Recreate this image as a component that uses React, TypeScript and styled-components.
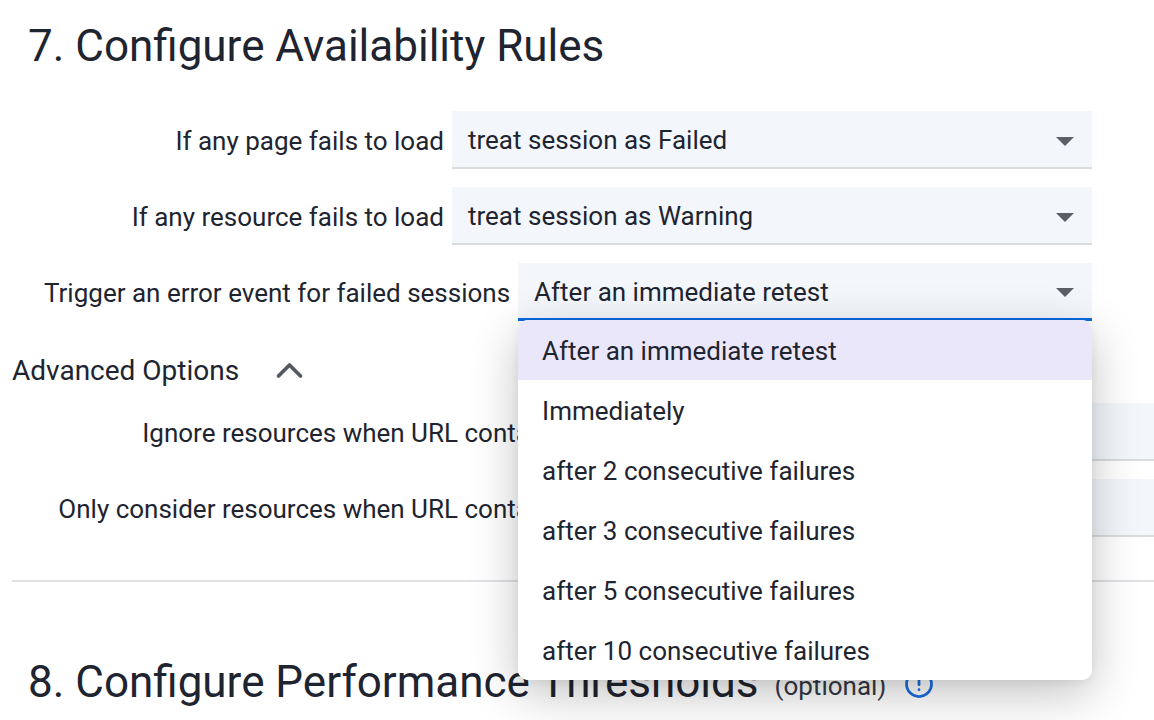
import styled, { createGlobalStyle } from "styled-components"

const GlobalStyle = createGlobalStyle`
html, body {
    margin: 0;
    padding: 0;
    background: #ffffff;
    overflow: hidden;
}
body {
    font-family: Roboto, "Liberation Sans", sans-serif;
    color: #1e2430;
}
`

const Page = styled.div`
width: 1154px;
height: 720px;
padding-left: 12px;
box-sizing: border-box;
overflow: hidden;
`

const Title = styled.h1<{ $top: number }>`
margin: ${p => p.$top}px 0 0 16px;
font-size: 44px;
line-height: 52px;
font-weight: 400;
color: #1e2430;
display: flex;
align-items: center;
white-space: nowrap;
`

const Optional = styled.span`
font-size: 26px;
color: #333a44;
margin-left: 16px;
margin-top: 8px;
`

const InfoIcon = styled.svg`
width: 30px;
height: 30px;
margin-left: 18px;
margin-top: 4px;
`

const Rules = styled.div`
margin: 39px 0 0 32px;
display: flex;
flex-direction: column;
gap: 18px;
width: 1048px;
`

const Row = styled.div`
display: flex;
align-items: center;
gap: 8px;
`

const Label = styled.label<{ $min: number }>`
min-width: ${p => p.$min}px;
flex-shrink: 0;
text-align: right;
font-size: 26px;
white-space: nowrap;
padding-top: 2px;
`

const SelectBox = styled.div<{ $open?: boolean }>`
position: relative;
flex: 1;
height: 58px;
box-sizing: border-box;
background: #f3f7fc;
border-bottom: ${p => (p.$open ? "3px solid #0a6ae0" : "2px solid #dcdcdc")};
display: flex;
align-items: center;
justify-content: space-between;
padding: 2px 18px 0 16px;
font-size: 26px;
`

const Caret = styled.span`
width: 0;
height: 0;
border-left: 9.5px solid transparent;
border-right: 9.5px solid transparent;
border-top: 9px solid #5b5f66;
margin-top: 2px;
`

const Menu = styled.ul`
position: absolute;
top: calc(100% + 2px);
left: 0;
right: 0;
margin: 0;
padding: 0;
list-style: none;
background: #ffffff;
border-radius: 10px;
overflow: hidden;
box-shadow: 0 14px 48px rgba(0, 0, 0, 0.24), 0 2px 8px rgba(0, 0, 0, 0.06);
z-index: 10;
`

const MenuItem = styled.li<{ $active?: boolean }>`
height: 60px;
display: flex;
align-items: center;
padding: 1px 0 0 24px;
box-sizing: border-box;
font-size: 26px;
background: ${p => (p.$active ? "#ebe7fb" : "#ffffff")};
`

const AdvancedToggle = styled.div`
margin-top: 29px;
height: 40px;
display: flex;
align-items: center;
font-size: 28px;
gap: 34px;
`

const Chevron = styled.svg`
width: 33px;
height: 33px;
`

const AdvancedRows = styled.div`
margin-top: 13px;
width: 1200px;
display: flex;
flex-direction: column;
gap: 18px;
`

const Input = styled.div`
flex: 1;
height: 58px;
box-sizing: border-box;
background: #f3f7fc;
border-bottom: 2px solid #dcdcdc;
`

const Divider = styled.hr`
margin: 43px 0 0 0;
border: none;
height: 2px;
width: 1200px;
background: #dfe1e5;
`

const failOptions = [
    "After an immediate retest",
    "Immediately",
    "after 2 consecutive failures",
    "after 3 consecutive failures",
    "after 5 consecutive failures",
    "after 10 consecutive failures",
]

export default function App() {
    return (
        <Page>
            <GlobalStyle />
            <Title $top={20}>7. Configure Availability Rules</Title>

            <Rules>
                <Row>
                    <Label $min={400}>If any page fails to load</Label>
                    <SelectBox>
                        <span>treat session as Failed</span>
                        <Caret />
                    </SelectBox>
                </Row>
                <Row>
                    <Label $min={400}>If any resource fails to load</Label>
                    <SelectBox>
                        <span>treat session as Warning</span>
                        <Caret />
                    </SelectBox>
                </Row>
                <Row>
                    <Label $min={400}>Trigger an error event for failed sessions</Label>
                    <SelectBox $open>
                        <span>After an immediate retest</span>
                        <Caret />
                        <Menu>
                            {failOptions.map((opt, i) => (
                                <MenuItem key={opt} $active={i === 0}>{opt}</MenuItem>
                            ))}
                        </Menu>
                    </SelectBox>
                </Row>
            </Rules>

            <AdvancedToggle>
                <span>Advanced Options</span>
                <Chevron viewBox="0 0 24 24" fill="none" stroke="#555a62" strokeWidth="2.7" strokeLinecap="round" strokeLinejoin="round">
                    <path d="M4 16l8-8 8 8" />
                </Chevron>
            </AdvancedToggle>

            <AdvancedRows>
                <Row>
                    <Label $min={552}>Ignore resources when URL contains</Label>
                    <Input />
                </Row>
                <Row>
                    <Label $min={552}>Only consider resources when URL contains</Label>
                    <Input />
                </Row>
            </AdvancedRows>

            <Divider />

            <Title $top={70}>
                8. Configure Performance Thresholds
                <Optional>(optional)</Optional>
                <InfoIcon viewBox="0 0 24 24" fill="none" stroke="#1a6ee0" strokeWidth="2.2" strokeLinecap="round">
                    <circle cx="12" cy="12" r="10" />
                    <line x1="12" y1="7.5" x2="12" y2="12.5" />
                    <line x1="12" y1="16.5" x2="12" y2="16.5" />
                </InfoIcon>
            </Title>
        </Page>
    )
}
